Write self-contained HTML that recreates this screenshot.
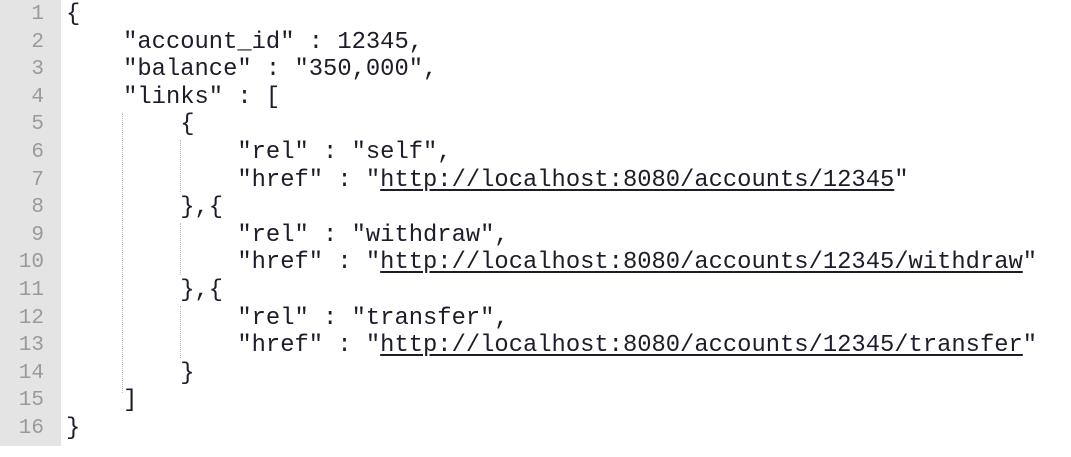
<!DOCTYPE html>
<html><head><style>
html,body{margin:0;padding:0;background:#fff;width:1071px;height:457px;overflow:hidden}
.g{position:absolute;left:0;top:0;width:61px;height:446px;background:#e4e4e4}
.l{position:absolute;left:0;height:27.6px;line-height:27.6px;font-family:"Liberation Mono",monospace;font-size:23.8px;white-space:pre;color:#1c1c2a}
.n{position:absolute;width:44px;text-align:right;color:#9a9a9a;font-family:"Liberation Mono",monospace;font-size:21px;line-height:27.6px}
.t{position:absolute;left:66px}
u{text-decoration:underline;text-underline-offset:3px}
.v{position:absolute;width:0;border-left:1px dotted #bbb}
</style></head><body>
<div class="g"></div>
<div class="v" style="left:122px;top:113px;height:280px"></div>
<div class="v" style="left:180px;top:140px;height:52px"></div>
<div class="v" style="left:180px;top:223px;height:52px"></div>
<div class="v" style="left:180px;top:306px;height:52px"></div>
<div class="l" style="top:1px"><span class="n">1</span><span class="t">{</span></div>
<div class="l" style="top:28.6px"><span class="n">2</span><span class="t">    "account_id" : 12345,</span></div>
<div class="l" style="top:56.2px"><span class="n">3</span><span class="t">    "balance" : "350,000",</span></div>
<div class="l" style="top:83.8px"><span class="n">4</span><span class="t">    "links" : [</span></div>
<div class="l" style="top:111.4px"><span class="n">5</span><span class="t">        {</span></div>
<div class="l" style="top:139px"><span class="n">6</span><span class="t">            "rel" : "self",</span></div>
<div class="l" style="top:166.6px"><span class="n">7</span><span class="t">            "href" : "<u>http://localhost:8080/accounts/12345</u>"</span></div>
<div class="l" style="top:194.2px"><span class="n">8</span><span class="t">        },{</span></div>
<div class="l" style="top:221.8px"><span class="n">9</span><span class="t">            "rel" : "withdraw",</span></div>
<div class="l" style="top:249.4px"><span class="n">10</span><span class="t">            "href" : "<u>http://localhost:8080/accounts/12345/withdraw</u>"</span></div>
<div class="l" style="top:277px"><span class="n">11</span><span class="t">        },{</span></div>
<div class="l" style="top:304.6px"><span class="n">12</span><span class="t">            "rel" : "transfer",</span></div>
<div class="l" style="top:332.2px"><span class="n">13</span><span class="t">            "href" : "<u>http://localhost:8080/accounts/12345/transfer</u>"</span></div>
<div class="l" style="top:359.8px"><span class="n">14</span><span class="t">        }</span></div>
<div class="l" style="top:387.4px"><span class="n">15</span><span class="t">    ]</span></div>
<div class="l" style="top:415px"><span class="n">16</span><span class="t">}</span></div>
</body></html>
